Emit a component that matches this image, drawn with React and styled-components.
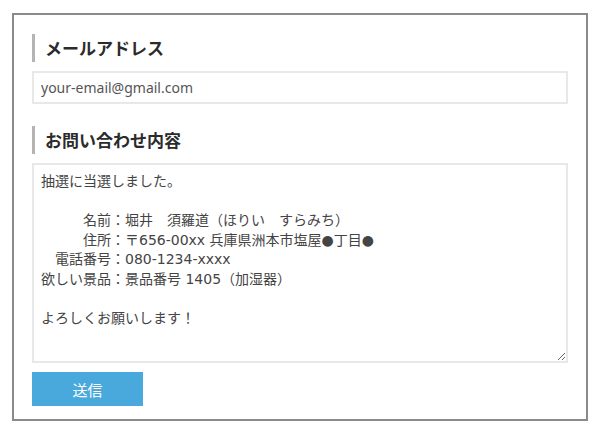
import React from "react";
import styled, { createGlobalStyle } from "styled-components";

const Global = createGlobalStyle`
  * { box-sizing: border-box; }
  html, body { margin: 0; padding: 0; background: #fff; }
  body { font-family: "Noto Sans", "Noto Sans CJK JP", sans-serif; color: #333; }
`;

const Frame = styled.form`
  width: 576px;
  margin: 13px 0 0 12px;
  border: 2px solid #8a8a8a;
  padding: 19px 18px 13px 18px;
  display: flex;
  flex-direction: column;
`;

const Heading = styled.h2`
  margin: 0 0 9px 0;
  height: 28px;
  display: flex;
  align-items: center;
  border-left: 3px solid #b4b4b4;
  padding-left: 10px;
  padding-bottom: 2px;
  font-family: "Noto Sans CJK JP", sans-serif;
  font-size: 17px;
  font-weight: 700;
  color: #2b2b2b;
  margin-top: ${(p) => (p.$first ? "0" : "22px")};
`;

const Input = styled.input`
  width: 100%;
  height: 33px;
  border: 2px solid #e8e8e8;
  padding: 0 7px;
  font-family: "Noto Sans", "Noto Sans CJK JP", sans-serif;
  font-size: 14px;
  color: #555;
  outline: none;
  background: #fff;
`;

const TextArea = styled.textarea`
  width: 100%;
  height: 200px;
  border: 2px solid #e8e8e8;
  padding: 7px 7px;
  font-family: "DejaVu Sans", "Noto Sans CJK JP", sans-serif;
  font-size: 14px;
  line-height: 19.6px;
  color: #444;
  outline: none;
  background: #fff;
  margin: 0;
  display: block;
  text-spacing-trim: space-all;
`;

const Button = styled.button`
  margin-top: 9px;
  width: 111px;
  height: 34px;
  border: none;
  background: #4aa9dc;
  color: #fff;
  font-family: "Noto Sans CJK JP", sans-serif;
  font-size: 15px;
  cursor: pointer;
  padding: 0;
`;

const message = `抽選に当選しました。

　　　名前：堀井　須羅道（ほりい　すらみち）
　　　住所：〒656-00xx 兵庫県洲本市塩屋●丁目●
　電話番号：080-1234-xxxx
欲しい景品：景品番号 1405（加湿器）

よろしくお願いします！`;

export default function App() {
  return (
    <>
      <Global />
      <Frame onSubmit={(e) => e.preventDefault()}>
        <Heading $first>メールアドレス</Heading>
        <Input type="text" defaultValue="your-email@gmail.com" />
        <Heading>お問い合わせ内容</Heading>
        <TextArea defaultValue={message} />
        <Button type="submit">送信</Button>
      </Frame>
    </>
  );
}
